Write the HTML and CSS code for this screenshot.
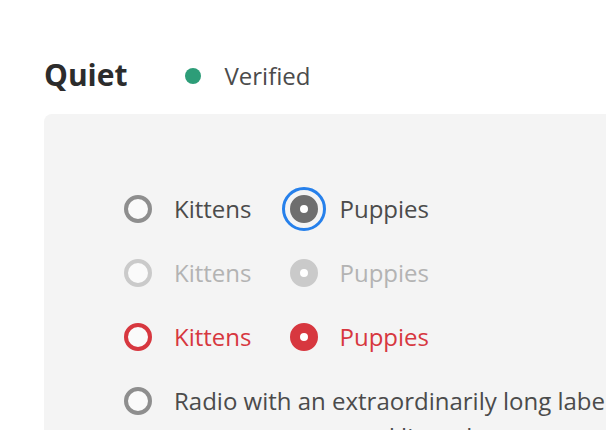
FILE: index.html
```html
<!DOCTYPE html>
<html lang="en">
<head>
<meta charset="utf-8">
<title>Radio group – Quiet</title>
<link rel="stylesheet" href="styles.css">
</head>
<body>
<div class="page">
  <header class="header">
    <h1 class="title">Quiet</h1>
    <div class="status">
      <span class="status-dot"></span>
      <span class="status-text">Verified</span>
    </div>
  </header>
  <section class="panel">
    <div class="row">
      <label class="radio">
        <span class="circle"></span>
        <span class="label">Kittens</span>
      </label>
      <label class="radio">
        <span class="circle checked focused"></span>
        <span class="label">Puppies</span>
      </label>
    </div>
    <div class="row disabled">
      <label class="radio">
        <span class="circle"></span>
        <span class="label">Kittens</span>
      </label>
      <label class="radio">
        <span class="circle checked"></span>
        <span class="label">Puppies</span>
      </label>
    </div>
    <div class="row invalid">
      <label class="radio">
        <span class="circle"></span>
        <span class="label">Kittens</span>
      </label>
      <label class="radio">
        <span class="circle checked"></span>
        <span class="label">Puppies</span>
      </label>
    </div>
    <div class="row">
      <label class="radio long">
        <span class="circle"></span>
        <span class="label">Radio with an extraordinarily long label that should wrap onto a second line when space runs out</span>
      </label>
    </div>
  </section>
</div>
</body>
</html>
```

FILE: styles.css
```css
html, body {
  margin: 0;
  padding: 0;
  background: #ffffff;
  overflow: hidden;
}

body {
  font-family: "Open Sans", "Noto Sans", sans-serif;
  color: #4b4b4b;
}

.page {
  padding: 55px 0 0 44px;
  width: 760px;
}

.header {
  display: flex;
  align-items: center;
  height: 40px;
}

.title {
  margin: 0;
  font-size: 30px;
  font-weight: 700;
  line-height: 40px;
  color: #2c2c2c;
}

.status {
  display: flex;
  align-items: center;
  margin-left: 57px;
  margin-top: 2px;
}

.status-dot {
  width: 16px;
  height: 16px;
  border-radius: 50%;
  background: #2d9d78;
}

.status-text {
  margin-left: 24px;
  font-size: 24px;
  line-height: 40px;
  color: #4b4b4b;
}

.panel {
  margin-top: 19px;
  background: #f4f4f4;
  border-radius: 8px;
  padding: 77px 40px 40px 80px;
  display: flex;
  flex-direction: column;
  gap: 28px;
}

.row {
  display: flex;
  align-items: flex-start;
}

.radio {
  display: flex;
  align-items: flex-start;
  margin-right: 38px;
  font-size: 24px;
  line-height: 36px;
}

.radio.long {
  margin-right: 0;
}

.circle {
  flex: none;
  box-sizing: border-box;
  width: 28px;
  height: 28px;
  margin-top: 4px;
  border-radius: 50%;
  border: 4px solid #8e8e8e;
  background: #fafafa;
}

.circle.checked {
  border-width: 10px;
  border-color: #6e6e6e;
  background: #ffffff;
}

.circle.focused {
  outline: 3px solid #2680eb;
  outline-offset: 5px;
}

.label {
  margin-left: 22px;
  color: #4b4b4b;
}

.disabled .circle {
  border-color: #cacaca;
}

.disabled .label {
  color: #b3b3b3;
}

.invalid .circle {
  border-color: #d7373f;
}

.invalid .label {
  color: #d7373f;
}
```
